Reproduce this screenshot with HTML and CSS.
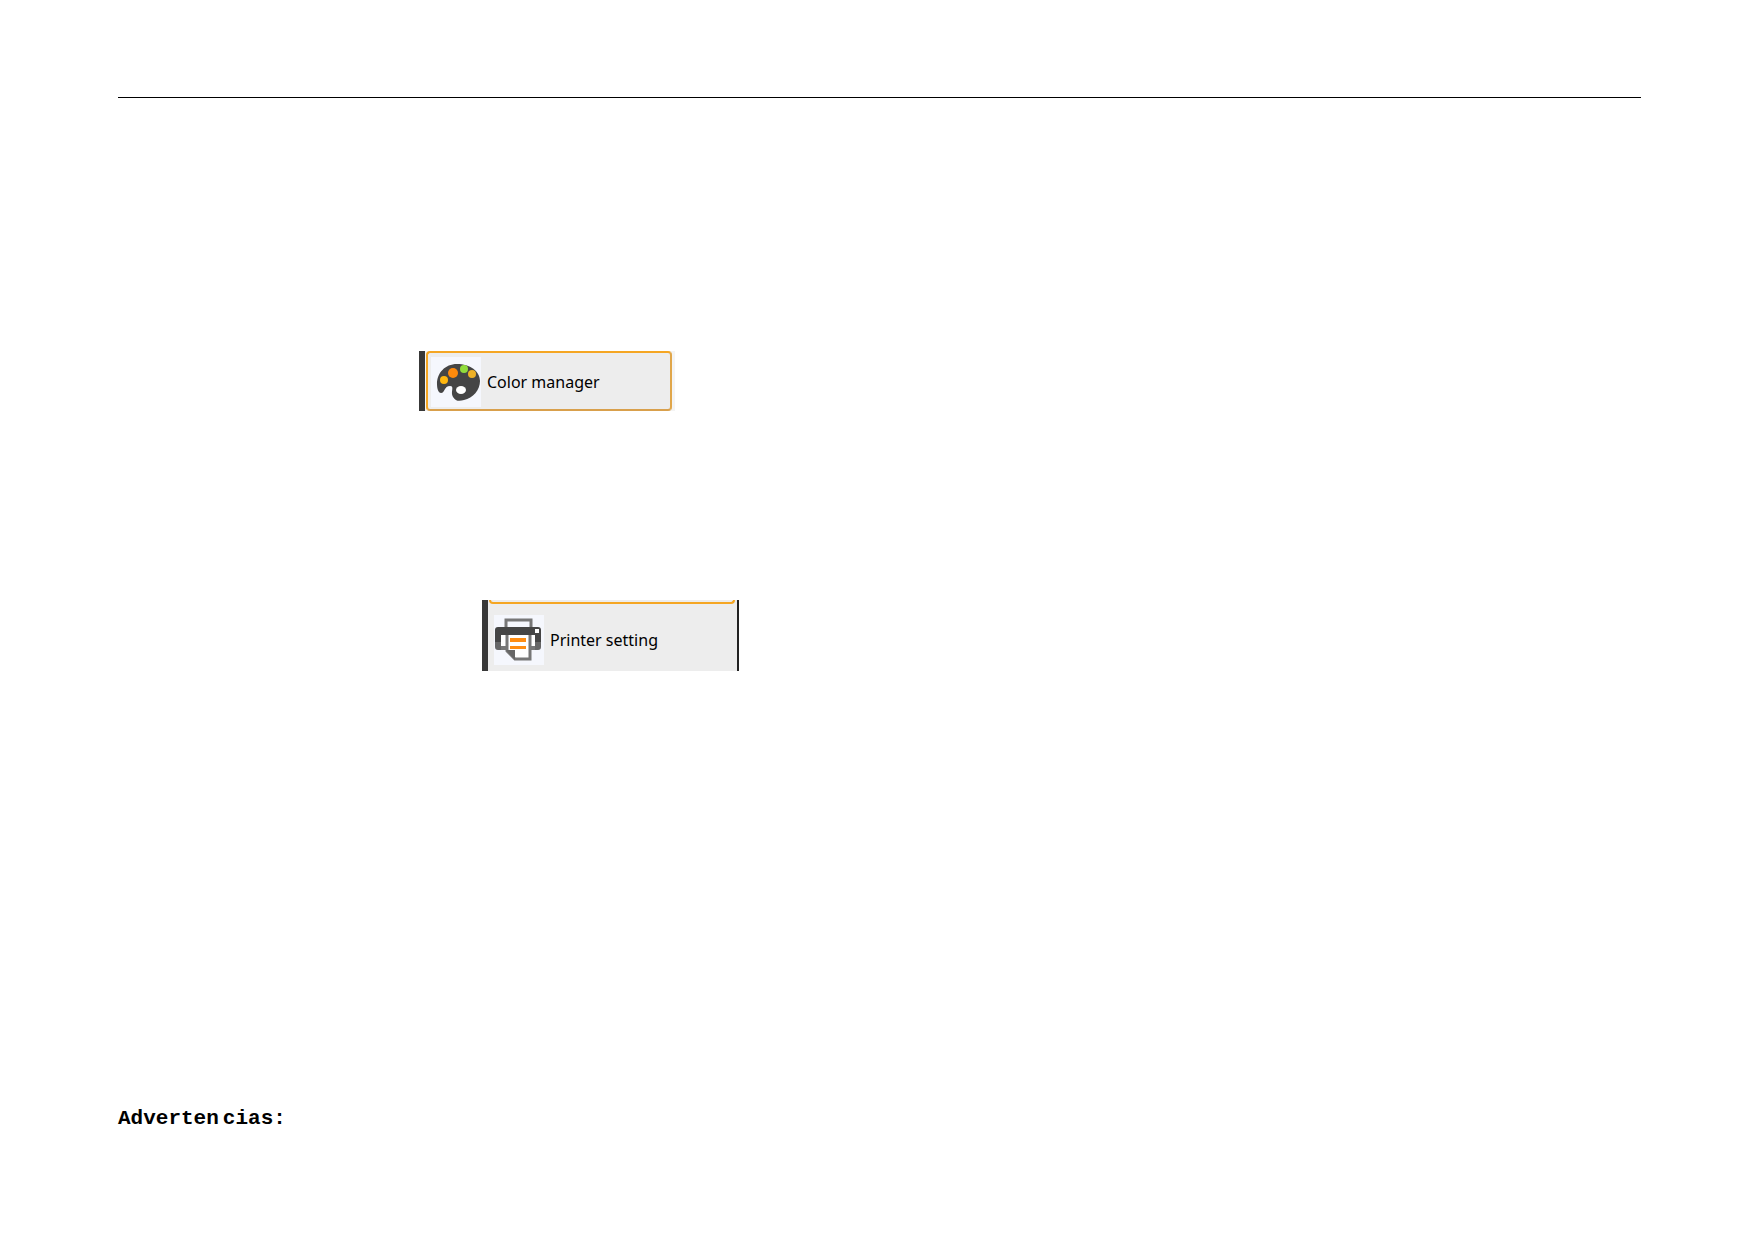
FILE: index.html
```html
<!DOCTYPE html>
<html lang="es">

<head>
	<meta charset="UTF-8">
	<meta name="viewport" content="width=device-width, initial-scale=1.0">
	<title>Advertencias</title>
	<link rel="stylesheet" href="styles.css">
</head>

<body>
	<main class="page">
		<hr class="rule">

		<button type="button" class="item color">
			<span class="panel">
				<svg class="icon" viewBox="0 0 50 50" aria-hidden="true">
					<path fill="#454545" d="M26 7C14 7 6 16 6 27c0 6 2 9 4 9 4 0 3-7 9-7 5 0 0 6 3 11 3 5 7 4 11 3 9-2 16-10 16-19 0-10-10-17-23-17z"/>
					<ellipse cx="30" cy="33" rx="5" ry="4" fill="#fff"/>
					<circle cx="13" cy="23" r="4" fill="#ffb70f"/>
					<circle cx="22" cy="16" r="5" fill="#ff8a0c"/>
					<circle cx="33" cy="12" r="4" fill="#90dc3c"/>
					<circle cx="41" cy="17" r="4" fill="#eeb126"/>
				</svg>
				<span>Color manager</span>
			</span>
		</button>

		<button type="button" class="item printer">
			<span class="panel">
				<svg class="icon" viewBox="0 0 50 50" aria-hidden="true">
					<path fill="none" stroke="#777" stroke-width="3" d="M12 13V5h25v8"/>
					<path fill="#454545" d="M4 12h40q3 0 3 3v13H1V15q0-3 3-3z"/>
					<path fill="#666" d="M1 27h7v8H4q-3 0-3-3zM40 27h7v5q0 3-3 3h-4z"/>
					<path fill="#fff" d="M7 20h34v11H7z"/>
					<path fill="#777" d="M7 31h5v4H7zM37 31h4v4h-4z"/>
					<path fill="#fff" d="M14 20h22v23H22l-8-8z"/>
					<path fill="none" stroke="#777" stroke-width="3" d="M13 20v16l8 8h15V20"/>
					<path fill="#666" d="M12 35h9v10z"/>
					<path fill="#ff8d12" d="M16 23h16v4H16zM16 31h16v3H16z"/>
					<path fill="#fff" d="M41 14h4v4h-4z"/>
				</svg>
				<span>Printer setting</span>
			</span>
		</button>

		<h1 class="title"><span>Adverten</span><span>cias:</span></h1>
	</main>
</body>

</html>
```
FILE: styles.css
```css
*,
*::before {
	box-sizing: border-box;
}

body {
	margin: 0;
	background: #fff;
	color: #000;
}

.page {
	display: flex;
	flex-direction: column;
	align-items: flex-start;
	padding: 97px 113px 96px 118px;
}

.rule {
	width: 100%;
	height: 1px;
	margin: 0;
	border: 0;
	background: #000;
}

/* menu buttons */
.item {
	display: block;
	padding: 0;
	border: 0;
	border-left: 6px solid #383838;
	background: #ededed;
	color: #000;
	font: 16px/24px "Noto Sans", "Open Sans", sans-serif;
	text-align: left;
	cursor: pointer;
}

.panel {
	display: flex;
	align-items: center;
	gap: 6px;
}

.icon {
	width: 50px;
	height: 50px;
	background: #f5f7fd;
}

.color {
	width: 256px;
	margin: 253px 0 0 301px;
	padding: 0 3px 0 1px;
	background: #f4f4f4;
}

.color .panel {
	height: 60px;
	padding: 2px 0 0 3px;
	border: 2px solid #f5a623;
	border-right-color: #e0a64a;
	border-bottom-color: #d9a04c;
	border-radius: 4px;
	background: #ededed;
}

.printer {
	width: 257px;
	margin: 189px 0 0 364px;
	border-right: 2px solid #222;
}

.printer .panel {
	height: 71px;
	padding: 8px 0 0 6px;
}

.printer::before {
	content: "";
	display: block;
	height: 4px;
	margin: 0 2px -4px 1px;
	border: 2px solid #f5a623;
	border-top: 0;
	border-radius: 0 0 4px 4px;
}

.title {
	display: flex;
	gap: 4px;
	margin: 434px 0 0;
	font: bold 21px/28px "Liberation Mono", monospace;
}
```
